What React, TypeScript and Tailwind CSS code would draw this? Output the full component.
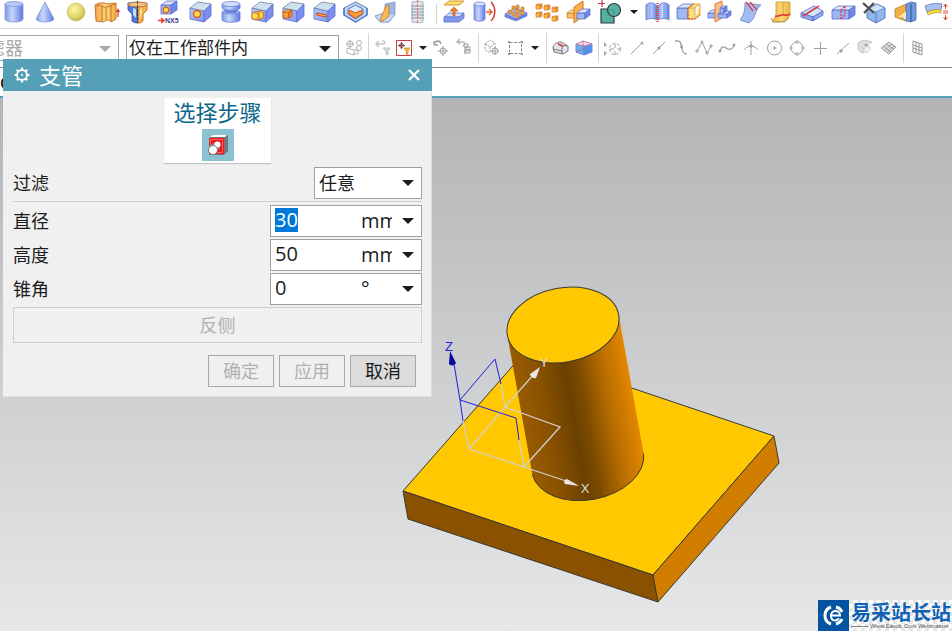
import { useEffect, useRef } from "react";
import type { ReactNode } from "react";

const CJK = "font-['Noto_Sans','Noto_Sans_CJK_SC',sans-serif]";

/* ---------- shared drawing pieces ---------- */

const INK = "#5f70cc";

function Cube({ x, y, w, h, d = 5, ink = INK, faces = ["#9db8f2", "#d6e5f8", "#6f86ea"] }: {
  x: number; y: number; w: number; h: number; d?: number; ink?: string; faces?: string[];
}) {
  const e = Math.round(d * 0.7);
  return (
    <g stroke={ink} strokeWidth="0.8" strokeLinejoin="round">
      <path d={`M${x} ${y}l${w} 0l0 ${h}l${-w} 0z`} fill={faces[0]} />
      <path d={`M${x} ${y}l${d} ${-e}l${w} 0l${-d} ${e}z`} fill={faces[1]} />
      <path d={`M${x + w} ${y}l${d} ${-e}l0 ${h}l${-d} ${e}z`} fill={faces[2]} />
    </g>
  );
}

function IsoCube({ children }: { children?: ReactNode }) {
  return (
    <g strokeLinejoin="round">
      <path d="M5 8L19 11L19 22L5 19z" fill="url(#blueFace)" stroke={INK} strokeWidth="0.8" />
      <path d="M5 8L13 2L26 4L19 11z" fill="#cfe0ee" stroke="#6f82a8" strokeWidth="0.8" />
      <path d="M19 11L26 4L26 16L19 22z" fill="#7d8df0" stroke={INK} strokeWidth="0.8" />
      {children}
    </g>
  );
}

const GOLD = ["#f7a03a", "#fbe05a", "#f08a28"];

type Tool = { name: string; art: ReactNode };

const shapeTools: Tool[] = [
  {
    name: "圆柱",
    art: (
      <g>
        <path d="M6 4v15c0 2 4 3 9 3s9-1 9-3V4" fill="url(#tube)" stroke="#8494dc" strokeWidth="0.8" />
        <ellipse cx="15" cy="4" rx="9" ry="2.5" fill="#b5caf7" stroke="#8494dc" strokeWidth="0.8" />
      </g>
    ),
  },
  {
    name: "圆锥",
    art: <path d="M15 2L6 19c1 4 17 4 18 0z" fill="url(#tube)" stroke="#8494dc" strokeWidth="0.8" />,
  },
  { name: "球", art: <circle cx="15" cy="12" r="9" fill="url(#ball)" stroke="#c4bc60" strokeWidth="0.6" /> },
  {
    name: "拉伸",
    art: (
      <g stroke="#c06a28" strokeWidth="0.9">
        <path d="M3 5l4-2h6l2 1 9-1v16l-5 3c-2-3-5-2-7 0l-8-1z" fill="url(#orange)" />
        <path d="M4 6c5-2 7 2 11 1l9-3M10 6v15M14 7v13M19 5v16" fill="none" />
        <path d="M26 17V10M24.500 12L26 9.500L27.500 12" stroke="#d03030" fill="none" strokeWidth="1.200" />
      </g>
    ),
  },
  {
    name: "旋转",
    art: (
      <g strokeWidth="0.9">
        <path d="M15 3H5v7l4 4v7c2 2 4 2 6 2z" fill="#5379dc" stroke="#3a55b0" />
        <path d="M15 3h9v7l-4 4v7c-2 2-3 2-5 2z" fill="#f8b04c" stroke="#b86a28" />
        <path d="M10 8v7l3 3V9z" fill="#bfe0f4" />
        <path d="M17 10v10l2-6V8z" fill="#fde48c" />
        <ellipse cx="14.500" cy="4.500" rx="9.500" ry="2.500" fill="#f7c27c" stroke="#a86a40" />
        <path d="M14.500 1v22" stroke="#333" strokeDasharray="3 1" />
      </g>
    ),
  },
  {
    name: "NX5 孔",
    art: (
      <g>
        <Cube x={7} y={5} w={10} h={9} d={6} />
        <circle cx="12" cy="10" r="2.800" fill="#fbdc52" stroke="#e05a20" strokeWidth="1.200" />
        <path d="M4 20.500h5M7 18l3 2.500L7 23" stroke="#e0402a" strokeWidth="1.600" fill="none" />
        <text x="11" y="23" fontSize="7" fontWeight="700" fill="#3a3c90" fontFamily="Liberation Sans, sans-serif">NX5</text>
      </g>
    ),
  },
  {
    name: "孔",
    art: <IsoCube><circle cx="12" cy="14" r="3.500" fill="#fbdc52" stroke="#e05a20" strokeWidth="1.400" /></IsoCube>,
  },
  {
    name: "凸台",
    art: (
      <g stroke="#7080dc" strokeWidth="0.8">
        <path d="M6 12v8c0 3 18 3 18 0v-8z" fill="url(#tube)" />
        <ellipse cx="15" cy="12" rx="9" ry="2" fill="#a9c0f6" />
        <path d="M9 8h12v4c0 1-12 1-12 0z" fill="#5f83dd" />
        <path d="M6 4v4c0 3 18 3 18 0V4z" fill="url(#tube)" />
        <ellipse cx="15" cy="4" rx="9" ry="2.500" fill="#cfe0f8" />
      </g>
    ),
  },
  {
    name: "圆形凸台",
    art: (
      <IsoCube>
        <path d="M8 12l6-1v8l-6 1z" fill="#fbd340" stroke="#d86a20" strokeWidth="0.9" />
        <ellipse cx="14" cy="15" rx="2.500" ry="4" fill="#fbd340" stroke="#d86a20" strokeWidth="0.9" />
        <circle cx="8" cy="16" r="3.500" fill="#fde24e" stroke="#d86a20" />
      </IsoCube>
    ),
  },
  {
    name: "垫块",
    art: <IsoCube><Cube x={5} y={12} w={6} h={6} d={3} ink="#c8501c" faces={GOLD} /></IsoCube>,
  },
  {
    name: "键槽",
    art: <IsoCube><path d="M8 13l9 2v2l-9-2z" fill="#fbd340" stroke="#e0401c" strokeWidth="1.200" /></IsoCube>,
  },
  {
    name: "腔体",
    art: (
      <g strokeLinejoin="round">
        <path d="M4 8l11.500-6L27 8v7l-11.500 7L4 15z" fill="#c4d8f6" stroke="#6678a8" />
        <path d="M8 9l7.500-4L23 9v5l-7.500 5L8 14z" fill="#dbe8f8" stroke="#4f78c8" />
        <path d="M9 10l6.500 3L22 10v4l-6.500 4L9 14z" fill="#f8a03a" stroke="#e0501c" />
        <path d="M4 8v7l11.500 7L27 15V8" fill="none" stroke="#4a78c8" strokeWidth="1.400" />
      </g>
    ),
  },
  {
    name: "三角形加强筋",
    art: (
      <g>
        <path d="M14 4l10-2v12l-6 8H9l-5-6 10-3z" fill="#9db6ea" stroke="#8090c0" strokeWidth="0.8" />
        <path d="M4 16l10-3 10 1-6 8H9z" fill="#c9daf6" stroke="#8a9ac0" strokeWidth="0.8" />
        <path d="M15 6l3-1v11l-6 5-3-1z" fill="#f8b85a" stroke="#c87a30" strokeWidth="0.9" />
      </g>
    ),
  },
  {
    name: "螺纹",
    art: (
      <g stroke="#9aa4b2" strokeWidth="0.8">
        <path d="M10 2c3-1 8-1 11 0v20c-3 1-8 1-11 0z" fill="#dfe4ea" />
        <path d="M9 6h13M9 9h13M9 12h13M9 15h13M9 18h13" stroke="#7c8896" />
        <path d="M15.500 0v24" stroke="#dc6060" strokeDasharray="3 1" />
      </g>
    ),
  },
];

const featureTools: Tool[] = [
  {
    name: "偏置面",
    art: (
      <g>
        <path d="M5 17l5-4h15l-5 4z" fill="#cfe0fa" stroke={INK} strokeWidth="0.8" />
        <path d="M5 17h15l5-4v5l-5 4H5z" fill="#7f98ec" stroke={INK} strokeWidth="0.8" />
        <path d="M5 5l5-4h15l-5 4z" fill="#fde06a" stroke="#d89030" />
        <path d="M14 16v-5h-3l4-4 4 4h-3v5z" fill="#f08028" stroke="#b85018" strokeWidth="0.6" />
      </g>
    ),
  },
  {
    name: "缩放体",
    art: (
      <g>
        <path d="M4 4v15c0 3 11 3 11 0V4z" fill="url(#tube)" stroke="#7080dc" strokeWidth="0.8" />
        <ellipse cx="9.500" cy="4" rx="5.500" ry="2" fill="#d6e4fb" stroke="#7080dc" strokeWidth="0.8" />
        <path d="M16 12h6M19 9l3 3-3 3" fill="none" stroke="#e06a30" strokeWidth="1.500" />
        <path d="M21 2c5 5 5 14 0 19" fill="none" stroke="#d83838" strokeWidth="1.500" />
      </g>
    ),
  },
  {
    name: "阵列特征",
    art: (
      <g>
        <path d="M4 14l10-6 12 5-11 6z" fill="#a9c4f6" stroke={INK} strokeWidth="0.8" />
        <path d="M4 14l11 5 11-6v3l-11 5-11-4z" fill="#6a88e4" stroke={INK} strokeWidth="0.6" />
        {[[11, 6], [15, 5], [20, 7], [7, 10], [15, 9], [19, 11], [11, 12], [15, 14]].map(([x, y]) => (
          <rect key={`${x}-${y}`} x={x} y={y} width="3" height="4" rx="1" fill="#f5a548" stroke="#b8702c" strokeWidth="0.7" />
        ))}
      </g>
    ),
  },
  {
    name: "阵列几何",
    art: (
      <g>
        {[[4, 5], [12, 6], [20, 8], [4, 13], [12, 14], [20, 17]].map(([x, y]) => (
          <Cube key={`${x}-${y}`} x={x} y={y} w={4} h={4} d={2} ink="#dc7c2c" faces={["#fbc04c", "#fde878", "#f4a038"]} />
        ))}
      </g>
    ),
  },
  {
    name: "镜像特征",
    art: (
      <g>
        <Cube x={4} y={13} w={9} h={5} d={4} ink="#d08030" faces={["#fbc068", "#fde49c", "#f0983a"]} />
        <path d="M11 7l9-6v15l-9 7z" fill="#fbb04a" stroke="#c87828" />
        <Cube x={14} y={13} w={8} h={6} d={5} />
      </g>
    ),
  },
  {
    name: "合并",
    art: (
      <g>
        <path d="M7 9h13v14H7z" fill="#54b0a2" stroke="#343c3c" strokeWidth="1.200" />
        <circle cx="20" cy="10" r="6.500" fill="#54b0a2" stroke="#343c3c" strokeWidth="1.200" />
        <path d="M14 10h6v6" fill="none" stroke="#419488" />
        <path d="M8 0v7M4 3.500h7" stroke="#c83048" strokeWidth="1.200" />
      </g>
    ),
  },
];

const bodyTools: Tool[] = [
  {
    name: "缝合",
    art: (
      <g>
        <path d="M4 5c3-3 8-3 11 1v14c-3-2-8-2-11 0z" fill="url(#tube)" stroke="#6f88cc" />
        <path d="M16 6c3-4 8-4 11-1v15c-3-2-8-2-11 0z" fill="url(#tube)" stroke="#6f88cc" />
        <path d="M8 4v15M22 4v15" stroke="#6f8cd8" strokeWidth="0.8" />
        <path d="M15.500 3v19" stroke="#e04040" strokeWidth="2.500" strokeDasharray="1 1" />
      </g>
    ),
  },
  {
    name: "补片",
    art: (
      <g>
        <Cube x={4} y={8} w={11} h={11} d={6} />
        <path d="M15 8h7v11h-7zM15 8l5-4h7l-5 4M27 4v11l-5 4" fill="#fbdc7a" stroke="#d89838" strokeWidth="0.8" />
        <path d="M15 19V8l6-4M15 19h7l5-4" fill="none" stroke="#d84838" strokeDasharray="2 1" />
      </g>
    ),
  },
  {
    name: "修剪体",
    art: (
      <g>
        <Cube x={4} y={13} w={8} h={5} d={4} />
        <path d="M11 4l7-3v17l-7 4z" fill="#fac08a" stroke="#d87838" />
        <Cube x={14} y={14} w={9} h={4} d={4} />
        <Cube x={16} y={8} w={4} h={5} d={3} />
      </g>
    ),
  },
  {
    name: "修剪片体",
    art: (
      <g>
        <path d="M10 3l16 2c-5 4-5 9-8 14L14 23l-9-3c4-5 5-10 5-17z" fill="#a3bdf3" stroke="#7f92d0" />
        <path d="M11 2l7 9M15 2l7 8" stroke="#d84048" strokeWidth="1.300" />
      </g>
    ),
  },
  {
    name: "延伸片体",
    art: (
      <g>
        <path d="M10 2h14v13l-4 6-8 1-6-1 4-5z" fill="url(#orange)" stroke="#d0ac48" />
        <path d="M17 2v12" stroke="#c8a038" />
        <path d="M9 16c4 1 6-2 9-1s4 0 6-1" fill="none" stroke="#dc3030" strokeWidth="1.500" />
        <path d="M5 18l2 4h11l5-4" fill="none" stroke="#b89c48" />
      </g>
    ),
  },
  {
    name: "拆分体",
    art: (
      <g stroke={INK} strokeWidth="0.9">
        <path d="M4 13l13-7 9 5-10 6z" fill="#d3e2f8" />
        <path d="M4 13l12 4v4L4 17zM16 17l10-6v4l-10 6z" fill="#8fa8ee" />
        <path d="M6 16L22 6" stroke="#d83848" strokeWidth="1.500" />
      </g>
    ),
  },
  {
    name: "分割面",
    art: (
      <g>
        <Cube x={4} y={10} w={17} h={9} d={6} />
        <path d="M13 19v-9l4-4v9z" fill="none" stroke="#d83848" strokeDasharray="2 1" strokeWidth="1.200" />
      </g>
    ),
  },
  {
    name: "删除面",
    art: (
      <g>
        <path d="M8 9l10-5 8 4v10l-9 5-9-5z" fill="#90b8ee" stroke="#5f78c4" />
        <path d="M8 9l9 3 9-4-8-4z" fill="#cfe2fa" stroke="#5f78c4" strokeWidth="0.8" />
        <path d="M17 12v11" stroke="#5f78c4" />
        <path d="M4 3l11 10M15 3L5 13" stroke="#4c5050" strokeWidth="2.200" />
      </g>
    ),
  },
  {
    name: "替换面",
    art: (
      <g>
        <path d="M5 9l11-5v8l-6 3 6 6-11-4z" fill="#f5ae42" stroke="#b88848" strokeWidth="0.9" />
        <path d="M16 4l5-2 5 1v17l-5 2-5-1z" fill="#6f98dc" stroke="#4f6fb0" strokeWidth="0.8" />
        <path d="M8 17l8-6v6z" fill="#fbe6a8" />
        <path d="M21 4v18" stroke="#3f68a8" strokeWidth="1.500" />
      </g>
    ),
  },
  {
    name: "加厚",
    art: (
      <g>
        <path d="M4 6c7-3 12-3 17-2l-1 6c-5-1-9 0-14 2z" fill="#a9c0f0" stroke="#6278b8" strokeWidth="0.8" />
        <path d="M6 12c5-2 9-3 14-2v3c-5-1-9 0-13 2z" fill="#fbdf4c" stroke="#b89a28" strokeWidth="0.8" />
        <path d="M24.500 4v5M24.500 20v-5M22.500 7l2-3 2 3M22.500 17l2 3 2-3M22 11h5M22 13h5" stroke="#d84030" fill="none" strokeWidth="0.9" />
      </g>
    ),
  },
];

const G = "#a0a0a0";

const captureTools: Tool[] = [
  { name: "点构造器", art: <g><path d="M3 6l3 3-3 2zM3 15l3 2-3 3z" fill={G} stroke="none" /><circle cx="14" cy="13" r="5.500" strokeDasharray="3 1.500" /><path d="M14 8v11M9 13h11" strokeDasharray="4 3" /></g> },
  { name: "端点", art: <g><path d="M7 18L17 8" /><circle cx="18" cy="7" r="1" fill={G} /></g> },
  { name: "中点", art: <g><path d="M6 18L18 6" /><circle cx="12" cy="12" r="1.200" fill={G} /></g> },
  { name: "控制点", art: <g strokeWidth="1.300"><path d="M5 5h3c6 0 1 13 9 13" /><circle cx="11.500" cy="11" r="0.800" fill={G} /></g> },
  { name: "极点", art: <g><path d="M4 15L9 6l5 11 5-8" /><circle cx="4" cy="15" r="1.200" /><circle cx="9" cy="6" r="1" /><circle cx="14" cy="17" r="1.200" /><circle cx="18" cy="10" r="1.200" /></g> },
  { name: "样条", art: <g strokeWidth="1.300"><path d="M4 15c4-11 8 5 14-5" /><circle cx="4" cy="15" r="0.800" /><circle cx="18" cy="9" r="0.800" /></g> },
  { name: "交点", art: <g><path d="M5 14c3-5 11-5 14 0M12 5v14" /><circle cx="12" cy="10" r="1.200" fill={G} /></g> },
  { name: "圆弧中心", art: <g><circle cx="12.500" cy="12" r="7" /><path d="M12.500 10v4M10.500 12h4" /></g> },
  { name: "象限点", art: <g><circle cx="12" cy="12" r="6" /><circle cx="12" cy="6" r="1.200" fill="#fff" /><circle cx="12" cy="18" r="1.200" fill="#fff" /><circle cx="6" cy="12" r="1.200" fill="#fff" /><circle cx="18" cy="12" r="1.200" fill="#fff" /></g> },
  { name: "现有点", art: <path d="M12.500 6v13M6 12.500h13" /> },
  { name: "曲线上的点", art: <g><path d="M6 18L18 7" /><circle cx="10" cy="15" r="1.200" fill={G} /></g> },
  { name: "面上的点", art: <g><path d="M4 7c4-4 9-3 14-1-3 1-4 3-4 5l-3-1c-2 2-2 4-1 7-4 0-6-3-6-6z" fill="#dedede" stroke="#c4c4c4" /><path d="M11 10l6 2-4 5-3-1z" fill="#efefef" stroke="#d4d4d4" /><circle cx="12" cy="9" r="1" fill={G} /></g> },
  { name: "有界栅格", art: <g><path d="M4 12l8-6 7 5-7 7z" fill="#ddd" /><path d="M6 10l8 6M9 8l8 5M7 15l8-7M10 17l7-7" /></g> },
];

/* ---------- small controls ---------- */

function ToolButton({ tool }: { tool: Tool }) {
  return (
    <button type="button" aria-label={tool.name} className="h-7 w-[31px] shrink-0">
      <svg viewBox="0 0 31 28" className="h-7 w-[31px]" aria-hidden="true">{tool.art}</svg>
    </button>
  );
}

function GreyButton({ name, children }: { name: string; children: ReactNode }) {
  return (
    <button type="button" aria-label={name} className="h-6 w-[23px] shrink-0">
      <svg viewBox="0 0 23 24" className="h-6 w-[23px]" fill="none" stroke={G} aria-hidden="true">{children}</svg>
    </button>
  );
}

function Arrow({ className = "" }: { className?: string }) {
  return (
    <svg viewBox="0 0 12 6" className={className} aria-hidden="true">
      <path d="M0 0h12L6 6z" fill="currentColor" />
    </svg>
  );
}

function Divider() {
  return (
    <div className="flex w-[6px] shrink-0 justify-center self-stretch py-1">
      <div className="w-px bg-[#d4d4d4]" />
    </div>
  );
}

function Field({ label, id, value, unit, selected = false }: {
  label: string; id: string; value: string; unit: string; selected?: boolean;
}) {
  const box = useRef<HTMLInputElement>(null);
  useEffect(() => {
    if (selected) {
      box.current?.focus();
      box.current?.select();
    }
  }, [selected]);
  return (
    <div className="flex items-center justify-between">
      <label htmlFor={id} className="text-lg leading-8">{label}</label>
      <div className="relative flex h-8 w-[152px] items-center border border-[#a0a0a0] bg-white font-['Open_Sans',sans-serif] text-[20px]">
        <input
          ref={box}
          id={id}
          defaultValue={value}
          className="mb-[2px] h-6 w-[90px] pl-1 leading-6 caret-transparent outline-none selection:bg-[#0078d7] selection:text-white"
        />
        <select aria-label={`${label}单位`} className="h-full w-[60px] appearance-none bg-transparent pr-[29px] outline-none">
          <option>{unit}</option>
        </select>
        <Arrow className="pointer-events-none absolute right-[7px] top-3 h-[6px] w-3" />
      </div>
    </div>
  );
}

/* ---------- dialog ---------- */

function BranchPipeDialog() {
  return (
    <section
      role="dialog"
      aria-labelledby="dialog-title"
      className={`absolute left-[3px] top-[59px] w-[429px] bg-[#f0f0f0] text-[#1c1c1c] shadow-[inset_-1px_-1px_0_#dedfe0] ${CJK}`}
    >
      <header className="flex h-8 items-center bg-[#559fb7] pl-[10px] pr-3 text-white">
        <svg viewBox="0 0 18 18" className="h-[18px] w-[18px]" fill="none" stroke="currentColor" aria-hidden="true">
          <circle cx="9" cy="9" r="5" strokeWidth="1.800" />
          <path d="M9 1.500v3M9 13.500v3M1.500 9h3M13.500 9h3M3.700 3.700l2 2M12.300 12.300l2 2M3.700 14.300l2-2M12.300 5.700l2-2" strokeWidth="2" />
          <circle cx="9" cy="9" r="1" fill="currentColor" stroke="none" />
        </svg>
        <h1 id="dialog-title" className="ml-2 flex-1 text-[22px] leading-8">支管</h1>
        <button type="button" aria-label="关闭" className="h-3 w-3">
          <svg viewBox="0 0 12 12" className="h-3 w-3" aria-hidden="true">
            <path d="M1 1l10 10M11 1L1 11" stroke="currentColor" strokeWidth="2.200" />
          </svg>
        </button>
      </header>

      <div className="px-[10px] pb-[10px] pt-[7px]">
        <div className="mx-auto flex h-[65px] w-[107px] flex-col items-center bg-white shadow-[0_1px_1px_#c4c4c4]">
          <h2 className="mb-[2px] text-[22px] leading-[29px] text-[#0b6688]">选择步骤</h2>
          <button type="button" aria-label="放置面" className="h-8 w-8 bg-[#8bc2d2]">
            <svg viewBox="0 0 32 32" className="h-8 w-8" aria-hidden="true">
              <path d="M7 9l4-3h15v16l-4 4H7z" fill="#777" />
              <path d="M8 8l3-2h14l-2 2z" fill="#fff" />
              <path d="M7 9h15v16H7z" fill="#f01818" />
              <path d="M8.500 10.500h12v13h-12z" fill="none" stroke="#ffb0b0" strokeDasharray="1 1" />
              <path d="M7 17l6-4h5v6l-6 6z" fill="#888" />
              <circle cx="15.500" cy="15.500" r="3" fill="#fff" />
              <circle cx="11" cy="21" r="4.500" fill="#fff" stroke="#777" />
            </svg>
          </button>
        </div>

        <div className="mt-1 flex items-center justify-between border-b border-[#cfcfcf] pb-[2px]">
          <label htmlFor="filter" className="text-lg leading-8">过滤</label>
          <div className="relative h-8 w-[108px] border border-[#a0a0a0] bg-white">
            <select id="filter" className="h-full w-full appearance-none bg-transparent pl-1 text-lg outline-none">
              <option>任意</option>
            </select>
            <Arrow className="pointer-events-none absolute right-[7px] top-3 h-[6px] w-3" />
          </div>
        </div>

        <div className="mt-[3px] flex flex-col gap-[2px]">
          <Field label="直径" id="diameter" value="30" unit="mm" selected />
          <Field label="高度" id="height" value="50" unit="mm" />
          <Field label="锥角" id="taper" value="0" unit="°" />
        </div>

        <button type="button" disabled className="mt-[2px] h-9 w-full border border-[#cfcfcf] text-lg text-[#b0b0b0]">反侧</button>

        <div className="mt-3 flex justify-end gap-[5px] pr-[6px] text-lg">
          <button type="button" disabled className="h-8 w-[66px] border border-[#a8a8a8] text-[#b0b0b0]">确定</button>
          <button type="button" disabled className="h-8 w-[66px] border border-[#a8a8a8] text-[#b0b0b0]">应用</button>
          <button type="button" className="h-8 w-[66px] border border-[#a8a8a8] bg-[#dcdcdc]">取消</button>
        </div>
      </div>
    </section>
  );
}

/* ---------- 3D viewport ---------- */

function Model() {
  return (
    <svg viewBox="0 98 952 533" preserveAspectRatio="xMidYMid slice" className="absolute inset-0 h-full w-full" role="img" aria-label="带圆柱凸台的底板">
      <defs>
        <linearGradient id="barrel" gradientUnits="userSpaceOnUse" x1="507.400" y1="335.400" x2="618" y2="315.500">
          <stop offset="0" stopColor="#995b00" />
          <stop offset="0.200" stopColor="#8a5200" />
          <stop offset="0.450" stopColor="#6b4100" />
          <stop offset="0.570" stopColor="#7c4b00" />
          <stop offset="0.780" stopColor="#b76c00" />
          <stop offset="1" stopColor="#e28600" />
        </linearGradient>
      </defs>
      <g stroke="#3a3a34" strokeLinejoin="round">
        <path d="M403 491L525 352L774 436L653 575z" fill="#ffc800" />
        <path d="M403 491L653 575L658 602L408 519z" fill="#8a5100" />
        <path d="M653 575L774 436L779 463L658 602z" fill="#d07d00" />
      </g>
      <path d="M507.400 335.400L532.400 474.400A56.600 37.100 -10.800 0 0 643.600 453.600L618.600 314.600z" fill="url(#barrel)" />
      <path d="M532.400 474.400A56.600 37.100 -10.800 0 0 643.600 453.600" fill="none" stroke="#3a3a34" />
      <ellipse cx="563" cy="325" rx="56.600" ry="37.100" transform="rotate(-10.800 563 325)" fill="#ffc800" stroke="#3a3a34" />

      <g fill="none" stroke="#d3d0cc" strokeWidth="1.300">
        <path d="M463 421L469 449L524 467L575 484M469 449L505 407L535 373M505 407L560 427L524 467L519 440M505 407L501 384" />
      </g>
      <g fill="none" stroke="#2020e0">
        <path d="M463 421L460 400L454 364M501 384L495 359L460 400L516 418L519 440" />
      </g>
      <path d="M450 351L456 363C454 366 451 366 449 364z" fill="#0808a0" />
      <path d="M540 367L536 378C533 379 530 376 530 374z" fill="#e6e6e6" />
      <path d="M579 486L565 484C563 482 565 479 567 479z" fill="#e6e6e6" />
      <g fontFamily="Liberation Sans, sans-serif" fontSize="13" textAnchor="middle">
        <text x="449" y="351" fill="#2222dd">Z</text>
        <text x="544" y="367" fill="#dcdcdc">Y</text>
        <text x="585" y="493" fill="#dcdcdc">X</text>
      </g>
    </svg>
  );
}

function SiteBadge() {
  return (
    <div className="absolute bottom-0 right-0 flex h-[31px] w-[134px] bg-white">
      <svg viewBox="0 0 31 31" className="h-[31px] w-[31px] shrink-0" aria-hidden="true">
        <path d="M0 0h31v31H0z" fill="#0254a0" />
        <path d="M13 7a9 9 0 0 0 0 17M18 7a9 9 0 0 1 6 5M24 19a9 9 0 0 1-6 5" fill="none" stroke="#fff" strokeWidth="3" />
        <path d="M12 15.500h10c0-6-9-6-9 0s5 6 8 3" fill="none" stroke="#fff" strokeWidth="2" />
      </svg>
      <div className="flex-1 bg-[repeating-conic-gradient(#ffffff_0_25%,#e6e6e6_0_50%)] bg-[length:8px_8px] pl-[2px]">
        <p className="whitespace-nowrap font-['Noto_Sans_CJK_SC',sans-serif] text-[20px] font-bold leading-[23px] text-[#0f62b4]">易采站长站</p>
        <p className="flex items-center whitespace-nowrap font-['Liberation_Sans',sans-serif] text-[6px] leading-[6px] text-[#555]">
          <span className="mr-[2px] h-px w-[17px] bg-[#888]" />
          Www.Easck.Com Webmaster
        </p>
      </div>
    </div>
  );
}

/* ---------- page ---------- */

export default function App() {
  return (
    <div className={`relative flex min-h-screen flex-col overflow-hidden bg-white ${CJK}`}>
      <svg className="absolute h-0 w-0" aria-hidden="true">
        <defs>
          <linearGradient id="tube">
            <stop offset="0" stopColor="#7f97e8" />
            <stop offset="0.400" stopColor="#c6d8fa" />
            <stop offset="1" stopColor="#5d78e2" />
          </linearGradient>
          <linearGradient id="blueFace" x2="1" y2="1">
            <stop offset="0" stopColor="#b4cdf0" />
            <stop offset="1" stopColor="#7d94f0" />
          </linearGradient>
          <linearGradient id="orange">
            <stop offset="0" stopColor="#f5a044" />
            <stop offset="0.500" stopColor="#fbd878" />
            <stop offset="1" stopColor="#f3b040" />
          </linearGradient>
          <radialGradient id="ball" cx="0.400" cy="0.350" r="0.650">
            <stop offset="0" stopColor="#fbf8a8" />
            <stop offset="0.600" stopColor="#e2da72" />
            <stop offset="1" stopColor="#c4b850" />
          </radialGradient>
        </defs>
      </svg>

      <nav aria-label="特征" className="-ml-px flex h-[29px] items-start border-b border-[#dcdcdc] text-[#1c1c1c]">
        {shapeTools.map((t) => <ToolButton key={t.name} tool={t} />)}
        <Divider />
        {featureTools.map((t) => <ToolButton key={t.name} tool={t} />)}
        <button type="button" aria-label="更多布尔操作" className="flex h-6 w-[17px] shrink-0 items-center justify-center">
          <Arrow className="h-1 w-2" />
        </button>
        {bodyTools.map((t) => <ToolButton key={t.name} tool={t} />)}
      </nav>

      <nav aria-label="选择" className="flex h-[39px] items-center border-b border-[#808888] text-[#1c1c1c]">
        <div className="relative -ml-[14px] h-[26px] w-[133px] shrink-0 border border-[#a8a8a8] text-[#a8a8a8]">
          <select disabled aria-label="滤器" className="h-full w-full appearance-none text-lg leading-6 opacity-100">
            <option>滤器</option>
          </select>
          <Arrow className="pointer-events-none absolute right-[7px] top-[10px] h-[6px] w-3" />
        </div>
        <div className="relative ml-[7px] h-[26px] w-[213px] shrink-0 border border-[#a0a0a0]">
          <select aria-label="选择范围" className="h-full w-full appearance-none pl-[2px] text-[17px] leading-6 outline-none">
            <option>仅在工作部件内</option>
          </select>
          <Arrow className="pointer-events-none absolute right-[7px] top-[10px] h-[6px] w-3" />
        </div>
        <div className="w-[3px] shrink-0" />
        <GreyButton name="保持选择"><g stroke="#b4b4b4"><circle cx="8" cy="8" r="3" /><path d="M8 4v8M4 8h8M5 12v5l7 2v-5zM12 14h4v4h-4" /><circle cx="17" cy="7" r="2.500" /><circle cx="17" cy="12" r="2.500" /></g></GreyButton>
        <Divider />
        <GreyButton name="重置过滤器"><g stroke="#c4c4c4"><path d="M6 8h6c3 0 2-4-1-3M8 5L5 8l3 3" strokeWidth="1.500" /><path d="M12 12h7l-2 3v4l-2-1v-3z" fill="#d8d8d8" /></g></GreyButton>
        <GreyButton name="选择优先级">
          <path d="M2.500 4.500h15v15h-15z" fill="#fff" stroke="#cc3a48" />
          <circle cx="7.500" cy="9.500" r="2" stroke="#a04050" />
          <path d="M7.500 6v7M4 9.500h7" stroke="#704858" />
          <path d="M10 12h6l-2 3v4l-2-1v-3z" fill="#f4b22e" stroke="#d08a20" strokeWidth="0.600" />
        </GreyButton>
        <button type="button" aria-label="更多过滤器" className="flex h-6 w-3 shrink-0 items-center justify-center"><Arrow className="h-1 w-2" /></button>
        <GreyButton name="移动选择"><path d="M5 9V5M5 9h4M5 8c2-4 6-4 7 0" strokeWidth="1.300" /><circle cx="14" cy="15" r="3" /><path d="M14 10v10M9 15h10" /></GreyButton>
        <GreyButton name="关联选择"><path d="M8 8L5 6l3-3M5 6h5c3 0 4 3 1 4" strokeWidth="1.500" stroke="#b4b4b4" /><path d="M12 8h4v3h-4zM13 11v7M13 14h5v3h-5zM14 11h4v3h-4z" fill="#eeeeee" /></GreyButton>
        <Divider />
        <GreyButton name="实体"><path d="M4 8l5-4 5 3v5M4 8v6l5 3M4 8l5 3 5-4M9 11v5" strokeDasharray="2 1" /><circle cx="14" cy="15" r="3" /><path d="M14 11v8M10 15h8" /></GreyButton>
        <GreyButton name="矩形选择"><path d="M5.500 6.500h12v11h-12z" strokeDasharray="3 1.500" stroke="#888" /><path d="M4 5h2v2H4zM17 5h2v2h-2zM4 17h2v2H4zM17 17h2v2h-2z" fill="#999" stroke="none" /></GreyButton>
        <button type="button" aria-label="更多选择方式" className="flex h-6 w-4 shrink-0 items-center justify-center"><Arrow className="h-1 w-2" /></button>
        <Divider />
        <GreyButton name="着色显示">
          <path d="M4 12c0-4 4-6 8-6l7 4v5l-5 3-9-2z" fill="#dfe6f2" stroke="#777" />
          <path d="M13 18v-5c0-3 2-4 5-3M4 13l9 2M9 8l5 3" stroke="#777" />
          <path d="M9 8l5 2" stroke="#d83838" strokeWidth="1.500" />
        </GreyButton>
        <GreyButton name="透视显示">
          <path d="M4 8l8 2v9l-8-3z" fill="#62b4f0" stroke="#6a88e0" />
          <path d="M12 10l8-2v8l-8 3z" fill="#4f92ea" stroke="#6a88e0" />
          <path d="M4 8l7-3 9 3-8 2z" fill="#f4e4f2" stroke="#c080b0" />
          <path d="M11 5v8l-7 3" stroke="#e05070" strokeWidth="0.800" />
        </GreyButton>
        <Divider />
        {captureTools.map((t) => <GreyButton key={t.name} name={t.name}>{t.art}</GreyButton>)}
        <Divider />
        <GreyButton name="栅格"><path d="M7 5l9 3v11l-9-3zM10 6v11M13 7v11M7 9l9 3M7 12l9 3" stroke="#989898" /></GreyButton>
      </nav>

      <div className="h-[30px] border-b-2 border-[#559fb7] text-[17px] leading-[30px]">C</div>

      <main className="relative flex-1 bg-linear-to-b from-[#b3b4b6] to-[#e6e7e9]">
        <Model />
        <SiteBadge />
      </main>

      <BranchPipeDialog />
    </div>
  );
}
